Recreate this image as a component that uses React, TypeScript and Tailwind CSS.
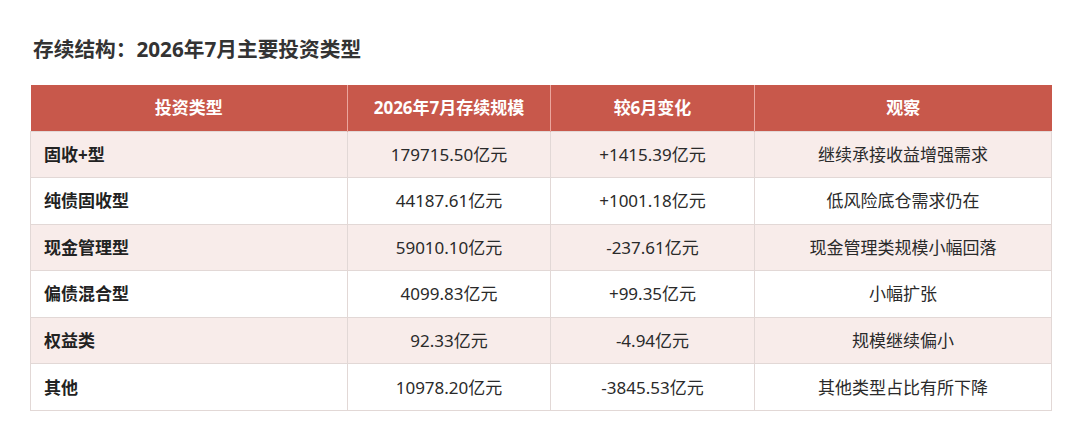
import React from "react";

const rows = [
  ["固收+型", "179715.50亿元", "+1415.39亿元", "继续承接收益增强需求"],
  ["纯债固收型", "44187.61亿元", "+1001.18亿元", "低风险底仓需求仍在"],
  ["现金管理型", "59010.10亿元", "-237.61亿元", "现金管理类规模小幅回落"],
  ["偏债混合型", "4099.83亿元", "+99.35亿元", "小幅扩张"],
  ["权益类", "92.33亿元", "-4.94亿元", "规模继续偏小"],
  ["其他", "10978.20亿元", "-3845.53亿元", "其他类型占比有所下降"],
];

const headers = ["投资类型", "2026年7月存续规模", "较6月变化", "观察"];

export default function App() {
  return (
    <div
      className="w-[1080px] h-[441px] bg-white pt-[35px] px-[30px]"
      style={{ fontFamily: '"Noto Sans", "Noto Sans CJK SC", sans-serif' }}
    >
      <h2 className="pl-[3px] text-[20.7px] leading-[28px] font-bold text-[#333333]">
        存续结构：2026年7月主要投资类型
      </h2>
      <table className="mt-[22px] w-[1021px] table-fixed border-collapse text-[17px]">
        <colgroup>
          <col className="w-[317px]" />
          <col className="w-[203px]" />
          <col className="w-[204px]" />
          <col className="w-[297px]" />
        </colgroup>
        <thead>
          <tr className="bg-[#c8584b] h-[46px]">
            {headers.map((h, i) => (
              <th
                key={i}
                className={`text-center font-bold text-white p-0 ${
                  i > 0 ? "border-l border-[#eba69d]" : ""
                }`}
              >
                {h}
              </th>
            ))}
          </tr>
        </thead>
        <tbody>
          {rows.map((r, ri) => (
            <tr
              key={ri}
              className={`h-[46.6px] ${ri % 2 === 0 ? "bg-[#f8ecea]" : "bg-white"}`}
            >
              {r.map((c, ci) => (
                <td
                  key={ci}
                  className={`border border-[#e2d8d6] p-0 ${
                    ci === 0
                      ? "pl-[13px] text-left font-bold text-[#222222]"
                      : "text-center text-[#2a2a2a]"
                  }`}
                >
                  {c}
                </td>
              ))}
            </tr>
          ))}
        </tbody>
      </table>
    </div>
  );
}
